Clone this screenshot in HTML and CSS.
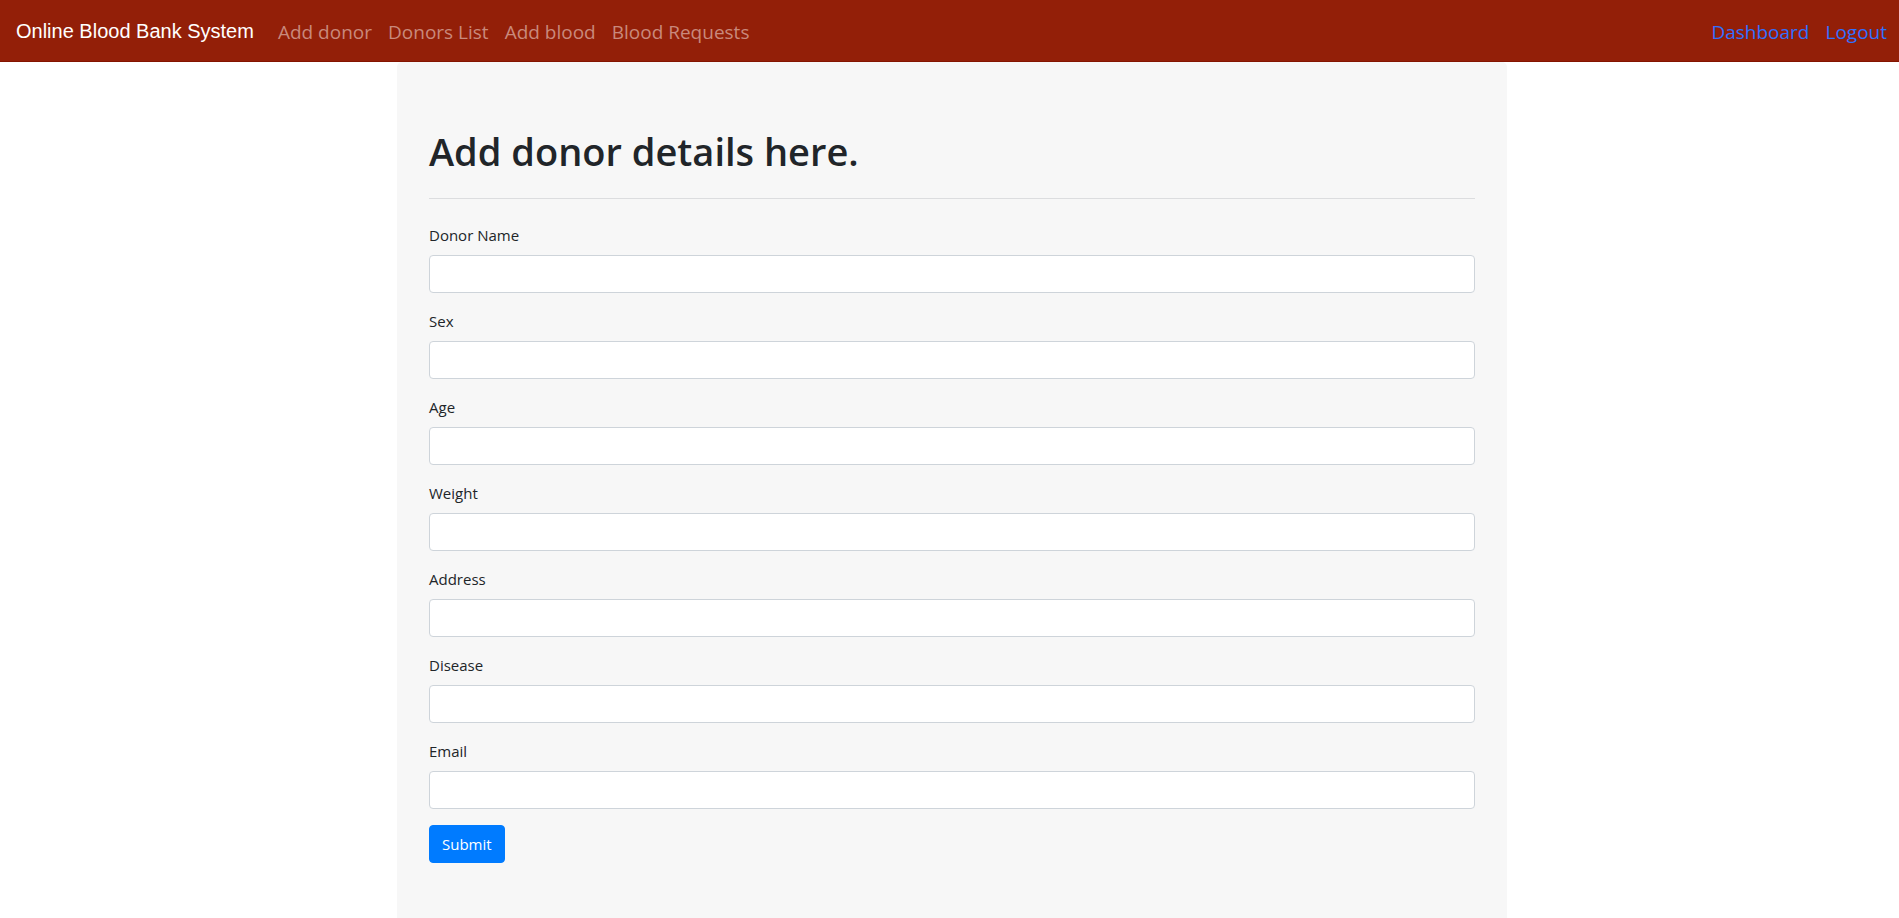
FILE: index.html
```html
<!DOCTYPE html>
<html lang="en">
<head>
<meta charset="utf-8">
<meta name="viewport" content="width=device-width, initial-scale=1">
<title>Online Blood Bank System</title>
<link rel="stylesheet" href="styles.css">
</head>
<body>
<nav class="navbar">
  <a class="brand" href="#">Online Blood Bank System</a>
  <div class="nav-links">
    <a class="nav-link" href="#">Add donor</a>
    <a class="nav-link" href="#">Donors List</a>
    <a class="nav-link" href="#">Add blood</a>
    <a class="nav-link" href="#">Blood Requests</a>
  </div>
  <div class="account-links">
    <a class="account-link" href="#">Dashboard</a>
    <a class="account-link" href="#">Logout</a>
  </div>
</nav>
<main class="page">
  <section class="panel">
    <h1 class="title">Add donor details here.</h1>
    <hr class="rule">
    <form class="form">
      <div class="field"><label class="label" for="name">Donor Name</label><input class="input" id="name" type="text"></div>
      <div class="field"><label class="label" for="sex">Sex</label><input class="input" id="sex" type="text"></div>
      <div class="field"><label class="label" for="age">Age</label><input class="input" id="age" type="text"></div>
      <div class="field"><label class="label" for="weight">Weight</label><input class="input" id="weight" type="text"></div>
      <div class="field"><label class="label" for="address">Address</label><input class="input" id="address" type="text"></div>
      <div class="field"><label class="label" for="disease">Disease</label><input class="input" id="disease" type="text"></div>
      <div class="field"><label class="label" for="email">Email</label><input class="input" id="email" type="email"></div>
      <button class="submit" type="submit">Submit</button>
    </form>
  </section>
</main>
</body>
</html>
```
FILE: styles.css
```css
* { box-sizing: border-box; }
body {
  margin: 0;
  min-height: 100vh;
  display: flex;
  flex-direction: column;
  background: #fff;
  color: #212529;
  font: 400 15px/24px "Open Sans", "Noto Sans", sans-serif;
}
.navbar {
  display: flex;
  align-items: center;
  padding: 8px 12px 8px 16px;
  background: #931f08;
  border-bottom: 1px solid #841400;
  font-size: 19px;
  line-height: 30px;
}
.navbar a { text-decoration: none; white-space: nowrap; }
.brand {
  margin-right: 24px;
  color: #fff;
  font-family: "Liberation Sans", Arial, sans-serif;
  font-size: 20px;
}
.nav-links { display: flex; gap: 16px; padding: 9px 0 6px; }
.nav-link { color: #c9897c; }
.account-links { display: flex; gap: 16px; margin-left: auto; padding: 9px 0 6px; }
.account-link { color: #3070ff; }
.page {
  flex: 1;
  display: flex;
  justify-content: center;
  padding-left: 5px;
}
.panel {
  width: 100%;
  max-width: 1110px;
  padding: 64px 32px 48px;
  background: #f7f7f7;
  border-radius: 5px 5px 0 0;
}
.title { margin: 0 0 22px; font-size: 38px; line-height: 50px; font-weight: 600; }
.rule { margin: 0 0 24px; border: 0; border-top: 1px solid #dcdddf; }
.form { display: flex; flex-direction: column; align-items: flex-start; gap: 16px; }
.field { display: flex; flex-direction: column; gap: 8px; width: 100%; }
.input {
  width: 100%;
  height: 38px;
  padding: 6px 12px;
  border: 1px solid #ced4da;
  border-radius: 4px;
  background: #fff;
  color: #495057;
  font: inherit;
}
.submit {
  padding: 6px 12px;
  border: 1px solid #007bff;
  border-radius: 4px;
  background: #007bff;
  color: #fff;
  font: inherit;
}
```
